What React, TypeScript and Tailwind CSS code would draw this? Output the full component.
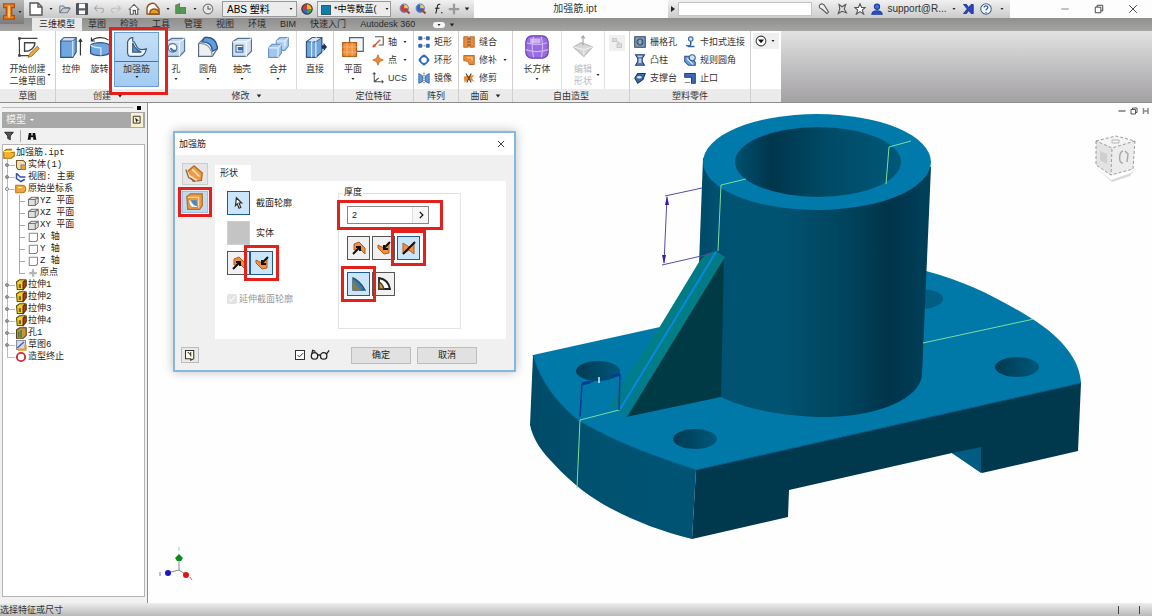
import { useState } from 'react'
import type { ReactNode } from 'react'
import clsx from 'clsx'

interface IconProps {
  className?: string
}

interface SvgProps extends IconProps {
  children: ReactNode
  box?: string
}

function Svg({ children, className = 'h-3 w-3', box = '0 0 16 16' }: SvgProps) {
  return (
    <svg viewBox={box} className={clsx('shrink-0', className)} fill="none" stroke="#555" strokeWidth="1.4" aria-hidden="true">
      {children}
    </svg>
  )
}

function Dot({ className = 'h-1 w-1' }: IconProps) {
  return (
    <Svg box="0 0 4 4" className={className}>
      <path d="M0.5 1h3L2 3z" fill="#222" stroke="none" />
    </Svg>
  )
}

/* ---------- large ribbon icons ---------- */

const big = 'h-6 w-6'

const SketchIcon = () => (
  <Svg box="0 0 28 28" className={big}>
    <path d="M4 4h21M4 4v20M4 24h12" stroke="#444" />
    <path d="M10 9h12c0 6-5 10-12 10z" stroke="#444" strokeWidth="1.6" />
    <path d="M2.500 2.500h3v3h-3zM2.500 22.500h3v3h-3z" fill="#444" stroke="none" />
    <path d="M25 13l-9 9-2 4 4-1 9-9z" fill="#efa93a" stroke="#9a6514" strokeWidth="1" />
  </Svg>
)

const ExtrudeIcon = () => (
  <Svg box="0 0 28 28" className={big}>
    <path d="M2 7l4-4h14v17l-4 6H2z" fill="#6fa8e0" stroke="#2f5582" />
    <path d="M2 7l4-4h14l-4 4z" fill="#cfe3f7" stroke="#2f5582" strokeWidth="1" />
    <path d="M16 7v18" stroke="#d8e9f8" />
    <path d="M25 24V5M23 8l2-3 2 3" stroke="#333" />
  </Svg>
)

const RevolveIcon = () => (
  <Svg box="0 0 28 28" className={big}>
    <path d="M3 12c4-4 18-4 22 0v9c-4 4-18 4-22 0z" fill="#6fa8e0" stroke="#2f5582" />
    <path d="M3 12c4 3 9 3 12 3v9" stroke="#d8e9f8" />
    <path d="M4 7c5-5 15-5 20-1M4 3v4h4" stroke="#333" />
  </Svg>
)

const RibIcon = () => (
  <Svg box="0 0 28 28" className={big}>
    <path d="M7 25c-3 0-4-2-4-5V8c1-3 3-5 6-5v4c4 1 3 7 7 9 3 2 6 1 9 0-1 5-3 9-8 9z" fill="#f5f9fd" stroke="#395b82" />
    <path d="M9 9v11h10c-5-2-8-5-10-11z" fill="#5b97cf" stroke="#395b82" />
  </Svg>
)

const HoleIcon = () => (
  <Svg box="0 0 28 28" className={big}>
    <path d="M3 8l6-4h15v15l-6 6H3z" fill="#c3d5e9" stroke="#54749a" />
    <path d="M3 8h15v17M18 8l6-4" stroke="#eef5fb" />
    <circle cx="10" cy="15" r="5" fill="#fff" stroke="#54749a" />
    <path d="M8 15a4 4 0 0 0 6 3" stroke="#3672b3" strokeWidth="2.500" />
  </Svg>
)

const FilletIcon = () => (
  <Svg box="0 0 28 28" className={big}>
    <path d="M3 10l7-7c9-1 14 4 15 13l-6 9H3z" fill="#eceff3" stroke="#5f6b7a" />
    <path d="M10 3c9-1 14 4 15 13l-6 3c0-8-5-11-12-11z" fill="#5d9ee0" stroke="#2f5582" />
    <path d="M3 10c9-1 15 4 16 15" stroke="#8a97a7" />
  </Svg>
)

const ShellIcon = () => (
  <Svg box="0 0 28 28" className={big}>
    <path d="M3 8l6-4h16v15l-6 6H3z" fill="#d3e1f0" stroke="#54749a" />
    <path d="M3 8h16v17M19 8l6-4" stroke="#f3f8fc" />
    <path d="M7 12h8v8H7z" fill="#fff" stroke="#54749a" />
    <path d="M9 14h6v4H9z" fill="#2f6cb0" stroke="none" />
  </Svg>
)

const CombineIcon = () => (
  <Svg box="0 0 28 28" className={big}>
    <path d="M12 7l4-4h10v10l-4 5H12z" fill="#b5d3f1" stroke="#6c97c8" />
    <path d="M3 15l4-4h11v10l-4 5H3z" fill="#a3c7ec" stroke="#6c97c8" />
    <path d="M3 15h11v11M14 15l4-4M22 7l4-4M12 7h10v6" stroke="#e3effa" />
  </Svg>
)

const DirectIcon = () => (
  <Svg box="0 0 28 28" className={big}>
    <path d="M4 8l7-5h11v17l-7 6H4z" fill="#6fa4dc" stroke="#2f5582" />
    <path d="M4 8l7-5h11l-7 5z" fill="#d5e6f6" stroke="#2f5582" strokeWidth="1" />
    <path d="M15 8v18M10 8v18M10 8l6-5" stroke="#dcebf8" />
    <path d="M22 12h2v-3l4 5-4 5v-3h-2z" fill="#1e3350" stroke="none" />
  </Svg>
)

const PlaneIcon = () => (
  <Svg box="0 0 28 28" className={big}>
    <path d="M10 3h16v16H10z" fill="#f3f5f7" stroke="#52657c" />
    <path d="M2 9h16v16H2z" fill="#f0923f" stroke="#b65d16" />
    <path d="M7 9v16M13 9v16M2 14h16M2 20h16" stroke="#f8b67a" strokeWidth="1" />
  </Svg>
)

const BoxIcon = () => (
  <Svg box="0 0 28 28" className={big}>
    <rect x="1" y="1" width="26" height="26" rx="7" fill="#9b6be0" stroke="#6b3db5" />
    <path d="M2 9c7 3 16 3 24 0M1 17c8 3 17 3 26 0M10 2c-2 8-2 16 0 24M19 2c2 8 2 16 0 24" stroke="#cdb3f5" />
    <path d="M6 4h12v6H6z" fill="#e2d3fb" stroke="none" opacity=".7" />
  </Svg>
)

const EditShapeIcon = () => (
  <Svg box="0 0 28 28" className={big}>
    <path d="M3 14l9-5 13 5-10 11z" fill="#d7d7d7" stroke="#bcbcbc" />
    <path d="M14 1v11M12 4l2-3 2 3" stroke="#aaa" />
    <path d="M3 14l12 3 10-3M15 17v7" stroke="#eee" />
  </Svg>
)

/* ---------- small ribbon icons ---------- */

const small = 'h-3 w-3'

const AxisIcon = () => (
  <Svg className={small}>
    <path d="M4 1h11v11H9" stroke="#555" />
    <path d="M1 15L11 5" stroke="#e0562a" strokeWidth="2" />
    <circle cx="3" cy="13" r="2" fill="#e0562a" stroke="none" />
  </Svg>
)
const PointIcon = () => (
  <Svg className={small}>
    <path d="M8 1l2 5 5 2-5 2-2 5-2-5-5-2 5-2z" fill="#ee8a34" stroke="#c0601a" strokeWidth="1" />
  </Svg>
)
const UcsIcon = () => (
  <Svg className={small}>
    <path d="M3 1v12h12M3 13l6-5M1 3l2-2 2 2M13 11l2 2-2 2" />
  </Svg>
)
const RectPatternIcon = () => (
  <Svg className={small}>
    <path d="M1 1h4v4H1zM11 1h4v4h-4zM1 11h4v4H1zM11 11h4v4h-4z" fill="#2f6cc0" stroke="#25578f" strokeWidth="1" />
    <path d="M6 3h4M6 13h4" strokeDasharray="1 1" />
  </Svg>
)
const CircPatternIcon = () => (
  <Svg className={small}>
    <circle cx="8" cy="8" r="5" stroke="#2f6cc0" strokeWidth="2.500" />
    <path d="M6 1h4v3H6zM6 12h4v3H6zM1 6h3v4H1zM12 6h3v4h-3z" fill="#2f6cc0" stroke="none" />
  </Svg>
)
const MirrorIcon = () => (
  <Svg className={small}>
    <path d="M8 1v14" strokeDasharray="2 1" />
    <path d="M1 2l5 3v8l-5 2zM15 2l-5 3v8l5 2z" fill="#5d97d8" stroke="#2b5f9e" strokeWidth="1" />
  </Svg>
)
const StitchIcon = () => (
  <Svg className={small}>
    <path d="M1 1h6v14H1zM9 1h6v14H9z" fill="#ee8a34" stroke="#a9500f" strokeWidth="1" />
    <path d="M6 4h4M6 8h4M6 12h4" stroke="#555" />
  </Svg>
)
const PatchIcon = () => (
  <Svg className={small}>
    <path d="M1 2h14v12H8c0-4-3-5-7-5z" fill="#ee8a34" stroke="#a9500f" strokeWidth="1" />
    <path d="M5 5h7v4" stroke="#fbd3ac" />
  </Svg>
)
const TrimIcon = () => (
  <Svg className={small}>
    <path d="M1 6l14-2-3 4 3 5-8-3-5 4z" fill="#ee8a34" stroke="none" />
    <path d="M4 2l7 12M11 2L5 14" stroke="#444" />
  </Svg>
)
const GrillIcon = () => (
  <Svg className={small}>
    <path d="M1 1h14v14H1z" fill="#7d9fc4" stroke="#2d4562" />
    <circle cx="8" cy="8" r="4" fill="#c6def5" stroke="#2d4562" />
    <path d="M6 4v8M8 4v8M10 4v8" strokeWidth="1" />
  </Svg>
)
const BossIcon = () => (
  <Svg className={small}>
    <path d="M2 1h12l-3 5v4l3 5H2l3-5V6z" fill="#557fc0" stroke="#29457a" />
    <path d="M5 3h6M7 6v6M9 6v6" stroke="#dde9f8" />
  </Svg>
)
const RestIcon = () => (
  <Svg className={small}>
    <path d="M5 2h10l-3 8-7 5-4-7z" fill="#2f70bd" stroke="#1c3a61" />
    <ellipse cx="7" cy="7" rx="4" ry="2.500" fill="#cde2f6" stroke="#1c3a61" strokeWidth="1" />
  </Svg>
)
const SnapIcon = () => (
  <Svg className={small}>
    <circle cx="9" cy="4" r="3" fill="#d4e5f7" stroke="#2f62a3" />
    <path d="M9 7v4c0 3-5 3-6 1M5 14h9" stroke="#2f62a3" strokeWidth="2" />
  </Svg>
)
const RuleFilletIcon = () => (
  <Svg className={small}>
    <path d="M1 3h6l8 8v4H6l-5-5z" fill="#6b9edb" stroke="#2b4f83" />
    <circle cx="11" cy="5" r="4" fill="#d4e5f7" stroke="#2f62a3" />
    <path d="M4 6l8 8" stroke="#fff" />
  </Svg>
)
const LipIcon = () => (
  <Svg className={small}>
    <path d="M1 2h14v13h-5V7H1z" fill="#3968bd" stroke="#213e79" />
    <path d="M1 14h7" stroke="#888" />
  </Svg>
)

/* ---------- dialog icons ---------- */

type WedgeKind = 'left' | 'right' | 'both'

function WedgeIcon({ kind }: { kind: WedgeKind }) {
  return (
    <Svg className="h-4 w-4">
      {kind === 'left' && (
        <>
          <path d="M3 4l5-2 6 6v6l-5-5-6 1z" fill="#ef9140" stroke="#b25c18" strokeWidth="1" />
          <path d="M2 14l7-7M5 7h4v4" stroke="#111" strokeWidth="2" />
        </>
      )}
      {kind === 'right' && (
        <>
          <path d="M2 5l6 3 5-5v10l-5 1-6-6z" fill="#ef9140" stroke="#b25c18" strokeWidth="1" />
          <path d="M14 2L8 8M8 5v4h4" stroke="#111" strokeWidth="2" />
        </>
      )}
      {kind === 'both' && (
        <>
          <path d="M2 3l6 4 5-4v11l-5-4-6 4z" fill="#ef9140" stroke="#b25c18" strokeWidth="1" />
          <path d="M14 2L2 14" stroke="#111" strokeWidth="2" />
        </>
      )}
    </Svg>
  )
}

function RibKindIcon({ flat }: { flat?: boolean }) {
  return (
    <Svg box="0 0 24 22" className="h-5 w-6">
      {flat ? (
        <>
          <path d="M3 5l4-3h13v13l-3 4H4z" fill="#ef9a3c" stroke="#a8733b" />
          <path d="M4 6h12v12" stroke="#fbd6a4" />
          <path d="M5 8c3 0 4 7 10 7v2H9c-3-1-4-5-4-9z" fill="#f5f3ee" stroke="#b98346" strokeWidth="1" />
          <path d="M8 9h6v6c-4 0-5-3-6-6z" fill="#3b8ad4" stroke="none" />
        </>
      ) : (
        <>
          <path d="M4 8l7-6 9 8-1 8-9 1z" fill="#f09a44" stroke="#b06922" />
          <path d="M2 6l4 7 8 5M9 6l8 8" stroke="#fbdcb5" strokeWidth="2" />
          <path d="M2 6l3 9 7 4" stroke="#7b6652" />
        </>
      )}
    </Svg>
  )
}

function ExtentIcon({ filled }: { filled?: boolean }) {
  return (
    <Svg className="h-4 w-4">
      {filled ? (
        <>
          <path d="M2 2c3 1 9 6 12 12H2z" fill="#2f7fb5" stroke="#33546b" />
          <path d="M2 3v11h9c-4-2-7-6-9-11z" fill="#8c7a3a" stroke="none" />
        </>
      ) : (
        <>
          <path d="M3 2c6 1 10 5 11 11H3z" fill="#fff" stroke="#222" strokeWidth="1.800" />
          <path d="M3 6c3 1 4 4 5 7H3z" fill="#d29a45" stroke="#4c4526" />
        </>
      )}
    </Svg>
  )
}

/* ---------- title bar ---------- */

function QuickBar() {
  return (
    <div className="flex h-full w-[474px] shrink-0 items-center bg-gradient-to-b from-[#f1f1f1] to-[#c9c9c9] pl-7">
      <div className="flex w-[194px] items-center justify-between pr-2">
        <button aria-label="新建"><Svg className="h-4 w-4"><path d="M2 2h8l4 4v8H2z" fill="#fff" /><path d="M10 2v4h4" /></Svg></button>
        <Dot />
        <button aria-label="打开"><Svg className="h-3 w-3"><path d="M1 4h5l2 2h5v2M1 4v9h10l4-6H5l-4 6" fill="#c3ccd4" stroke="#74808b" /></Svg></button>
        <button aria-label="保存"><Svg className="h-3 w-3"><path d="M1 1h14v14H1z" fill="#595f69" stroke="#333" /><path d="M4 1h8v6H4zM4 10h8v5H4z" fill="#fff" stroke="none" /></Svg></button>
        <button aria-label="撤消"><Svg className="h-3 w-3"><path d="M6 3L2 7l4 4M2 7h9c4 0 4 5 0 6" stroke="#a5a5a5" /></Svg></button>
        <button aria-label="重做"><Svg className="h-3 w-3"><path d="M10 3l4 4-4 4M14 7H5c-4 0-4 5 0 6" stroke="#bdbdbd" /></Svg></button>
        <button aria-label="主页"><Svg className="h-3 w-3"><path d="M1 9l7-7 7 7M3 8v7h4v-5h3v5h3V8" fill="#fff" /></Svg></button>
        <button aria-label="外观"><Svg className="h-4 w-4"><path d="M2 13V7c1-5 7-6 9-3l3 4v5z" fill="#fff" stroke="#8a5a20" /><path d="M5 13v-2c1-4 7-4 9 0v2z" fill="#ee9a2e" stroke="#8a5a20" /></Svg></button>
        <Dot />
        <button aria-label="更新"><Svg className="h-3 w-3"><path d="M1 3l5-2v13H1zM7 6h7v8H7z" fill="#4aa04a" stroke="#6c7c6c" /></Svg></button>
        <Dot />
        <button aria-label="选择"><Svg className="h-3 w-3"><circle cx="8" cy="8" r="6.500" fill="#e7e7e7" stroke="#777" /><path d="M8 4v4h4" /></Svg></button>
      </div>
      <div className="relative mr-1 w-[75px]">
        <select aria-label="材料" className="block h-4 w-full appearance-none border border-[#9a9a9a] bg-[#ececec] pl-1 text-[10px] leading-[13px]">
          <option>ABS 塑料</option>
        </select>
        <Dot className="pointer-events-none absolute top-1.5 right-1 h-1 w-1" />
      </div>
      <button aria-label="色轮">
        <Svg className="h-3 w-3">
          <g stroke="none">
            <path d="M8 8V1a7 7 0 0 1 7 7z" fill="#e8b928" />
            <path d="M8 8h7a7 7 0 0 1-7 7z" fill="#3da34c" />
            <path d="M8 8v7a7 7 0 0 1-7-7z" fill="#3b63c9" />
            <path d="M8 8H1a7 7 0 0 1 7-7z" fill="#d03c34" />
          </g>
          <circle cx="8" cy="8" r="7" stroke="#333" />
        </Svg>
      </button>
      <div className="relative mx-1 w-[74px]">
        <select aria-label="外观颜色" className="block h-4 w-full appearance-none border border-[#9a9a9a] bg-[#ececec] pl-4 text-[9px] leading-[13px]">
          <option>*中等数蓝(</option>
        </select>
        <span className="pointer-events-none absolute top-1 left-1 h-2.5 w-2.5 border border-[#33596b] bg-[#0b7fae]" />
        <Dot className="pointer-events-none absolute top-1.5 right-0.5 h-1 w-1" />
      </div>
      <div className="flex flex-1 items-center justify-between px-1">
        {['#d03c34', '#3b63c9'].map((color) => (
          <button key={color} aria-label="调整外观">
            <Svg className="h-3 w-3"><circle cx="7" cy="7" r="5.500" fill={color} stroke="#6a86b8" /><path d="M7 2a5 5 0 0 1 5 5H7z" fill="#f0d048" stroke="none" /><path d="M8 8l6 6" stroke="#b34040" strokeWidth="3" /></Svg>
          </button>
        ))}
        <button aria-label="参数"><Svg className="h-3 w-3"><path d="M11 2c-3-1-4 1-4 4L5 14M4 7h6M12 13h2" stroke="#222" /></Svg></button>
        <button aria-label="添加"><Svg className="h-3 w-3"><path d="M8 1v14M1 8h14" stroke="#999" strokeWidth="3" /></Svg></button>
        <Dot className="h-1.5 w-1.5" />
      </div>
    </div>
  )
}

function TitleBar() {
  return (
    <div className="flex h-[18px] items-center bg-[#fdfdfd]">
      <QuickBar />
      <div className="flex-1 pl-2 text-center text-[10px] leading-none text-[#333]">加强筋.ipt</div>
      <div className="flex h-full w-[342px] shrink-0 items-center bg-gradient-to-b from-[#f1f1f1] to-[#cbcbcb]">
        <Svg className="mx-0.5 h-1.5 w-1.5" box="0 0 6 6"><path d="M1 0l4 3-4 3z" fill="#222" stroke="none" /></Svg>
        <input aria-label="搜索帮助" className="h-3.5 w-[134px] border border-[#c4c4c4] bg-white text-[9px]" />
        <div className="flex flex-1 items-center justify-between px-1.5">
          <button aria-label="搜索"><Svg><path d="M2 3c2-3 6-2 7 1l5 8-2 2-7-6C2 7 1 5 2 3z" fill="#eee" /></Svg></button>
          <button aria-label="通讯中心"><Svg><path d="M4 2l4 3 5-3-2 6 3 5-6-2-5 3 2-6z" fill="#ddd" /></Svg></button>
          <button aria-label="收藏夹"><Svg><path d="M8 1l2 5h5l-4 3.500 2 5.500-5-3.500L3 15l2-5.500L1 6h5z" fill="#fff" /></Svg></button>
          <button className="flex items-center gap-1 text-[10px] leading-none text-[#333]">
            <Svg><circle cx="8" cy="5" r="3.500" fill="#3f6ee0" stroke="#1e3ea0" /><path d="M1 15c1-6 13-6 14 0z" fill="#2b50c8" stroke="#1e3ea0" /></Svg>
            support@R...
          </button>
          <Dot />
          <button aria-label="Exchange"><Svg><path d="M2 2l5 6-5 6h4l3-4 3 4h3V2h-3L9 6 6 2z" fill="#2c47c4" stroke="#16257a" strokeWidth="1" /></Svg></button>
          <button aria-label="帮助" className="flex items-center gap-2">
            <Svg><circle cx="8" cy="8" r="7" fill="#fff" stroke="#3f5d85" /><path d="M5.500 6c0-3 5-3 5 0 0 2-2.500 2-2.500 4M8 12v1.500" stroke="#2c5cc4" strokeWidth="1.800" /></Svg>
            <Dot />
          </button>
        </div>
      </div>
      <div className="flex w-[142px] shrink-0 items-center justify-end gap-6 pr-3.5">
        <button aria-label="最小化"><Svg className="h-2.5 w-2.5"><path d="M2 8h12" stroke="#777" /></Svg></button>
        <button aria-label="还原"><Svg className="h-2.5 w-2.5"><path d="M2 5h9v9H2zM5 5V2h9v9h-3" stroke="#333" /></Svg></button>
        <button aria-label="关闭"><Svg className="h-2.5 w-2.5"><path d="M2 2l12 12M14 2L2 14" stroke="#333" /></Svg></button>
      </div>
    </div>
  )
}

const menuTabs = ['草图', '检验', '工具', '管理', '视图', '环境', 'BIM', '快速入门', 'Autodesk 360']

function MenuTabs() {
  return (
    <nav className="flex h-[13px] items-center gap-3.5 bg-gradient-to-b from-[#8f8f8f] to-[#a5a5a3] pl-8 text-[9px] leading-[13px] text-[#2b2b2b]">
      <button className="-mr-2 h-full w-[50px] bg-[#e9e9e9]">三维模型</button>
      {menuTabs.map((tab) => (
        <button key={tab} className="h-full whitespace-nowrap">{tab}</button>
      ))}
      <button aria-label="最小化功能区" className="ml-1 flex items-center gap-1">
        <span className="flex h-1.5 w-3 items-center justify-center rounded-full bg-[#f4f4f4]">
          <Dot />
        </span>
        <Dot className="h-1.5 w-1.5" />
      </button>
    </nav>
  )
}

/* ---------- ribbon ---------- */

interface BigButtonProps {
  icon: ReactNode
  label: string
  second?: string
  drop?: boolean
  width?: string
  faded?: boolean
}

function BigButton({ icon, label, second, drop, width = 'w-9', faded }: BigButtonProps) {
  return (
    <button
      className={clsx(
        'relative flex h-full shrink-0 flex-col items-center overflow-hidden pt-1 text-[9px] leading-3 whitespace-nowrap',
        width,
        faded ? 'text-[#bbb]' : 'text-[#333]',
      )}
    >
      {icon}
      <span className="mt-1">{label}</span>
      {second && <span>{second}</span>}
      {drop && !second && <Dot className="mt-0.5 h-1 w-1" />}
      {drop && second && <Dot className="absolute right-1 bottom-3 h-1 w-1" />}
    </button>
  )
}

function SmallButton({ icon, label, drop }: { icon: ReactNode; label: string; drop?: boolean }) {
  return (
    <button className="flex h-[18px] items-center gap-1 text-[9px] leading-3 whitespace-nowrap text-[#333]">
      {icon}
      <span>{label}</span>
      {drop && <Dot className="ml-0.5 h-1 w-1" />}
    </button>
  )
}

interface GroupProps {
  caption: string
  width: string
  drop?: boolean
  noLine?: boolean
  children: ReactNode
}

function Group({ caption, width, drop, noLine, children }: GroupProps) {
  return (
    <section className={clsx('flex shrink-0 flex-col', width, !noLine && 'border-r border-[#cfcfcf]')}>
      <div className="flex h-[58px] items-stretch bg-white">{children}</div>
      <div className="flex h-[13px] items-center justify-center gap-1.5 bg-[#ebebeb] text-[9px] leading-3 text-[#333]">
        {caption}
        {drop && <Dot className="h-1.5 w-1.5" />}
      </div>
    </section>
  )
}

function Ribbon() {
  return (
    <div className="flex h-[72px] border-b border-[#8c8c8c] bg-gradient-to-b from-[#e2e2e2] to-[#a3a1a4]">
      <Group caption="草图" width="w-14">
        <BigButton icon={<SketchIcon />} label="开始创建" second="二维草图" drop width="w-[55px]" />
      </Group>
      <Group caption="创建" width="w-[104px]" drop noLine>
        <BigButton icon={<ExtrudeIcon />} label="拉伸" width="w-[30px]" />
        <BigButton icon={<RevolveIcon />} label="旋转" width="w-[27px]" />
        <div className="relative shrink-0 p-px">
          <button className="flex h-[55px] w-[45px] flex-col items-center border border-[#6d9fd6] bg-gradient-to-b from-[#c5def6] to-[#a3cbf2] pt-0.5 text-[9px] leading-3 text-[#333]">
            <RibIcon />
            <span className="mt-0.5 w-full border-t border-[#3d73b5] pt-px">加强筋</span>
            <Dot />
          </button>
          <span className="pointer-events-none absolute -top-1 -right-2 -bottom-1.5 -left-1 z-10 border-3 border-[#e3201b]" />
        </div>
      </Group>
      <Group caption="修改" width="w-[174px]" drop>
        <BigButton icon={<HoleIcon />} label="孔" drop width="w-8" />
        <BigButton icon={<FilletIcon />} label="圆角" drop width="w-8" />
        <BigButton icon={<ShellIcon />} label="抽壳" drop width="w-9" />
        <BigButton icon={<CombineIcon />} label="合并" drop width="w-9" />
        <div className="w-px bg-[#d9d9d9]" />
        <BigButton icon={<DirectIcon />} label="直接" width="w-9" />
      </Group>
      <Group caption="定位特征" width="w-20">
        <BigButton icon={<PlaneIcon />} label="平面" drop width="w-[38px]" />
        <div className="flex flex-col pt-0.5">
          <SmallButton icon={<AxisIcon />} label="轴" drop />
          <SmallButton icon={<PointIcon />} label="点" drop />
          <SmallButton icon={<UcsIcon />} label="UCS" />
        </div>
      </Group>
      <Group caption="阵列" width="w-[45px]">
        <div className="flex flex-col pt-0.5 pl-1">
          <SmallButton icon={<RectPatternIcon />} label="矩形" />
          <SmallButton icon={<CircPatternIcon />} label="环形" />
          <SmallButton icon={<MirrorIcon />} label="镜像" />
        </div>
      </Group>
      <Group caption="曲面" width="w-[54px]" drop>
        <div className="flex flex-col pt-0.5 pl-1">
          <SmallButton icon={<StitchIcon />} label="缝合" />
          <SmallButton icon={<PatchIcon />} label="修补" drop />
          <SmallButton icon={<TrimIcon />} label="修剪" />
        </div>
      </Group>
      <Group caption="自由造型" width="w-[117px]">
        <BigButton icon={<BoxIcon />} label="长方体" drop width="w-12" />
        <div className="w-px bg-[#e2e2e2]" />
        <BigButton icon={<EditShapeIcon />} label="编辑" second="形状" drop faded width="w-[42px]" />
        <div className="w-px bg-[#e2e2e2]" />
        <button aria-label="转换" className="m-1 flex h-4 w-4 items-center justify-center bg-[#f0f0f0]">
          <Svg><path d="M2 2h5v4H2zM8 9h6v5H8zM7 5l4 3" fill="#ddd" stroke="#c8c8c8" /></Svg>
        </button>
      </Group>
      <Group caption="塑料零件" width="w-[121px]">
        <div className="grid grid-cols-[50px_1fr] grid-rows-[18px_18px_18px] pt-0.5 pl-1">
          <SmallButton icon={<GrillIcon />} label="栅格孔" />
          <SmallButton icon={<SnapIcon />} label="卡扣式连接" />
          <SmallButton icon={<BossIcon />} label="凸柱" />
          <SmallButton icon={<RuleFilletIcon />} label="规则圆角" />
          <SmallButton icon={<RestIcon />} label="支撑台" />
          <SmallButton icon={<LipIcon />} label="止口" />
        </div>
      </Group>
      <Group caption="" width="w-[30px]" noLine>
        <button aria-label="更多" className="m-0.5 flex h-4 flex-1 items-center gap-1 bg-[#efefef] pl-0.5">
          <Svg><circle cx="8" cy="8" r="6.500" fill="#fff" stroke="#444" /><path d="M4 6h8l-4 5z" fill="#111" stroke="none" /></Svg>
          <Dot />
        </button>
      </Group>
    </div>
  )
}

/* ---------- model browser ---------- */

type NodeKind = 'part' | 'solid' | 'view' | 'folder' | 'plane' | 'axis' | 'point' | 'extrude' | 'hole' | 'sketch' | 'end'

function NodeIcon({ kind }: { kind: NodeKind }) {
  switch (kind) {
    case 'part':
      return <Svg><path d="M1 6l4-3h6v4h4v5l-4 3H1z" fill="#f5b62c" stroke="#a36c0b" /><path d="M1 6h10l4-3" stroke="#fff2c0" /></Svg>
    case 'solid':
      return <Svg><path d="M2 2h9l3 3v9H4l-2-3z" fill="#f7dfa0" stroke="#735c2c" /><path d="M8 8h6v6H8z" fill="#e9a13a" stroke="#6b83b8" /></Svg>
    case 'view':
      return <Svg><path d="M2 3l5 5h7M2 3v7l6 4 5-3" stroke="#3450b4" strokeWidth="2" /></Svg>
    case 'folder':
      return <Svg><path d="M1 3h8c7 0 7 10 0 10H1z" fill="#f0a63c" stroke="#b57618" /><path d="M4 6h5" stroke="#fff" /></Svg>
    case 'plane':
      return <Svg><path d="M2 6l4-3h9v7l-4 4H2zM2 6h9v8M11 6l4-3" fill="#e0e0e0" stroke="#777" /></Svg>
    case 'axis':
      return <Svg><path d="M3 3h11v9M3 3v11h9" stroke="#888" /><path d="M12 14l2-2" /></Svg>
    case 'point':
      return <Svg><path d="M8 3v10M3 8h10" stroke="#b5b5b5" strokeWidth="3" /></Svg>
    case 'extrude':
      return <Svg><path d="M2 4l4-3h8l-3 3v10H3z" fill="#f4cf28" stroke="#5d4c08" /><path d="M11 4l4-2v7l-4 5z" fill="#b23a22" stroke="#5d2a08" /><path d="M5 7h3v5H5z" fill="#7a6614" stroke="none" /></Svg>
    case 'hole':
      return <Svg><path d="M2 4l4-3h9v10l-4 4H2z" fill="#c6953a" stroke="#594012" /><path d="M5 6v7M8 4v10" stroke="#507a3d" strokeWidth="2" /></Svg>
    case 'sketch':
      return <Svg><path d="M2 2h12v12H2z" fill="#d5d9ea" stroke="#8c8ca3" /><path d="M3 12l9-8" stroke="#4763b5" strokeWidth="2" /><path d="M4 14h10V8" stroke="#e29833" strokeWidth="3" /></Svg>
    case 'end':
      return <Svg><circle cx="8" cy="8" r="5.500" stroke="#d02b35" strokeWidth="2.500" /></Svg>
  }
}

const treeNodes: { label: string; kind: NodeKind; level: number; leaf?: boolean }[] = [
  { label: '加强筋.ipt', kind: 'part', level: 0, leaf: true },
  { label: '实体(1)', kind: 'solid', level: 1 },
  { label: '视图: 主要', kind: 'view', level: 1 },
  { label: '原始坐标系', kind: 'folder', level: 1 },
  { label: 'YZ 平面', kind: 'plane', level: 2 },
  { label: 'XZ 平面', kind: 'plane', level: 2 },
  { label: 'XY 平面', kind: 'plane', level: 2 },
  { label: 'X 轴', kind: 'axis', level: 2 },
  { label: 'Y 轴', kind: 'axis', level: 2 },
  { label: 'Z 轴', kind: 'axis', level: 2 },
  { label: '原点', kind: 'point', level: 2 },
  { label: '拉伸1', kind: 'extrude', level: 1 },
  { label: '拉伸2', kind: 'extrude', level: 1 },
  { label: '拉伸3', kind: 'extrude', level: 1 },
  { label: '拉伸4', kind: 'extrude', level: 1 },
  { label: '孔1', kind: 'hole', level: 1 },
  { label: '草图6', kind: 'sketch', level: 1 },
  { label: '造型终止', kind: 'end', level: 1, leaf: true },
]

function Browser() {
  return (
    <aside className="flex w-[148px] shrink-0 flex-col border-r border-[#8f8f8f] bg-[#f1f1f1] px-0.5">
      <div className="flex h-[9px] items-center gap-1 pr-1">
        <div className="h-px flex-1 bg-[#bdbdbd]" />
        <span className="h-1 w-1 bg-black" />
      </div>
      <div className="flex h-4 items-center justify-between bg-[#a8a8a8] pr-0.5 pl-1 text-[10px] leading-none text-[#f2f2f2]">
        <span className="flex items-center gap-1">
          模型
          <Svg box="0 0 4 4" className="h-1 w-1"><path d="M0 1h4L2 3z" fill="#fff" stroke="none" /></Svg>
        </span>
        <button aria-label="帮助" className="flex h-3.5 w-3 items-center justify-center bg-[#f7f1cf]">
          <Svg className="h-2.5 w-2.5"><path d="M2 2h11v11H2z" stroke="#222" /><path d="M5 4l6 5H8l-1 4z" fill="#222" stroke="none" /></Svg>
        </button>
      </div>
      <div className="flex h-4 items-center gap-1.5 pl-0.5">
        <button aria-label="过滤器"><Svg className="h-2.5 w-2.5"><path d="M1 2h14l-5 6v6l-4-2V8z" fill="#555" stroke="#222" /></Svg></button>
        <span className="h-3 w-px bg-[#aaa]" />
        <button aria-label="查找"><Svg className="h-2.5 w-2.5"><path d="M1 14l2-11h4v4h2V3h4l2 11h-5v-4H6v4z" fill="#111" stroke="none" /></Svg></button>
      </div>
      <ul className="mb-1.5 flex-1 overflow-hidden border border-[#b5b5b5] bg-white pt-0.5 font-['Liberation_Mono','Noto_Sans_CJK_SC',monospace] text-[9px] leading-3 text-[#222]">
        {treeNodes.map((node, i) => (
          <li key={node.label} className="flex h-3 items-stretch whitespace-nowrap">
            {node.level > 0 && (
              <span className="relative w-3">
                <span className={clsx('absolute top-0 left-1 w-px bg-[#bbb]', i === treeNodes.length - 1 ? 'h-1.5' : 'h-full')} />
                {node.level === 1 && <span className="absolute top-1.5 left-1 h-px w-2 bg-[#bbb]" />}
                {node.level === 1 && !node.leaf && (
                  <span className={clsx('absolute top-1 left-0.5 h-1 w-1 rounded-full border border-[#888]', node.kind === 'folder' ? 'bg-white' : 'bg-[#999]')} />
                )}
              </span>
            )}
            {node.level === 2 && (
              <span className="relative w-3">
                <span className={clsx('absolute top-0 left-1 w-px bg-[#aaa]', node.kind === 'point' ? 'h-1.5' : 'h-full')} />
                <span className="absolute top-1.5 left-1 h-px w-1.5 bg-[#aaa]" />
              </span>
            )}
            <button className="flex items-center gap-px">
              <NodeIcon kind={node.kind} />
              <span>{node.label}</span>
            </button>
          </li>
        ))}
      </ul>
    </aside>
  )
}

/* ---------- rib dialog ---------- */

interface ToggleProps {
  label: string
  active?: boolean
  marked?: boolean
  disabled?: boolean
  children?: ReactNode
}

function Toggle({ label, active, marked, disabled, children }: ToggleProps) {
  return (
    <span className={clsx('relative shrink-0', marked && 'z-10')}>
      <button
        aria-label={label}
        aria-pressed={active}
        disabled={disabled}
        className={clsx(
          'flex h-6 w-[23px] items-center justify-center border',
          disabled && 'border-[#cfcfcf] bg-[#c4c4c4]',
          active && 'border-[#1d5a96] bg-[#cbe6fb]',
          !disabled && !active && 'border-[#555] bg-[#f1f1f1]',
        )}
      >
        {children}
      </button>
      {marked && <span className="pointer-events-none absolute -inset-1.5 border-3 border-[#e3201b]" />}
    </span>
  )
}

function RibDialog() {
  const [thickness, setThickness] = useState('2')
  const [preview, setPreview] = useState(true)

  return (
    <div
      role="dialog"
      aria-label="加强筋"
      className="absolute top-7 left-[25px] flex h-[241px] w-[343px] flex-col border-2 border-[#86b7dc] bg-[#f0f0f0] text-[9px] leading-3 text-[#222] shadow-[0_0_10px_rgba(0,0,0,0.25)]"
    >
      <div className="flex h-[22px] items-center justify-between bg-white pr-2 pl-1">
        <span>加强筋</span>
        <button aria-label="关闭"><Svg className="h-2.5 w-2.5"><path d="M3 3l10 10M13 3L3 13" stroke="#222" /></Svg></button>
      </div>
      <div className="flex flex-1 pr-2">
        <div className="flex w-10 shrink-0 flex-col items-center gap-1.5 pt-2">
          <button aria-label="垂直于草图平面" className="flex h-[22px] w-[26px] items-center justify-center border border-[#ccc] bg-[#e6e6e6]">
            <RibKindIcon />
          </button>
          <span className="relative">
            <button aria-label="平行于草图平面" aria-pressed="true" className="flex h-[22px] w-[26px] items-center justify-center border border-[#9cc1e2] bg-[#c3d9ee]">
              <RibKindIcon flat />
            </button>
            <span className="pointer-events-none absolute -inset-1 border-3 border-[#e3201b]" />
          </span>
        </div>
        <div className="flex flex-1 flex-col pt-2.5">
          <button role="tab" aria-selected="true" className="h-4 w-9 bg-white pr-2 text-center">形状</button>
          <div className="flex h-[158px] justify-between bg-white pr-[45px] pl-3">
            <div className="flex flex-col pt-2.5">
              <div className="flex items-center gap-1.5">
                <Toggle label="截面轮廓" active>
                  <Svg className="h-3.5 w-3.5"><path d="M5 2l6 6H8l2 5-2 1-2-5-2 2z" fill="#fff" stroke="#333" /></Svg>
                </Toggle>
                <span>截面轮廓</span>
              </div>
              <div className="mt-1.5 flex items-center gap-1.5">
                <Toggle label="实体" disabled />
                <span>实体</span>
              </div>
              <div className="mt-1.5 flex">
                <Toggle label="方向 1"><WedgeIcon kind="left" /></Toggle>
                <Toggle label="方向 2" active marked><WedgeIcon kind="right" /></Toggle>
              </div>
              <label className="mt-[18px] flex items-center gap-0.5 text-[#999]">
                <input type="checkbox" defaultChecked disabled className="h-2.5 w-2.5 opacity-60" />
                延伸截面轮廓
              </label>
            </div>
            <fieldset className="relative mt-3 mb-2.5 w-[123px] border border-[#e3e3e3] pt-3 pl-2">
              <legend className="absolute -top-2 left-1 bg-white px-px">厚度</legend>
              <div className="relative w-[82px]">
                <input
                  aria-label="厚度"
                  value={thickness}
                  onChange={(e) => setThickness(e.target.value)}
                  className="block h-[18px] w-full border border-[#888] bg-white px-1 text-[9px] leading-3"
                />
                <button aria-label="更多" className="absolute top-px right-px flex h-4 w-4 items-center justify-center border-l border-[#ddd] bg-[#f7f7f7]">
                  <Svg className="h-2.5 w-2.5"><path d="M6 3l5 5-5 5" stroke="#111" strokeWidth="2" /></Svg>
                </button>
                <span className="pointer-events-none absolute -top-1.5 -right-3.5 -bottom-1.5 -left-2.5 border-3 border-[#e3201b]" />
              </div>
              <div className="mt-3 flex gap-0.5">
                <Toggle label="一侧"><WedgeIcon kind="left" /></Toggle>
                <Toggle label="另一侧"><WedgeIcon kind="right" /></Toggle>
                <Toggle label="双侧" active marked><WedgeIcon kind="both" /></Toggle>
              </div>
              <div className="mt-3 flex gap-0.5">
                <Toggle label="到下一个" active marked><ExtentIcon filled /></Toggle>
                <Toggle label="有限的"><ExtentIcon /></Toggle>
              </div>
            </fieldset>
          </div>
        </div>
      </div>
      <div className="flex h-[30px] items-center pl-1.5">
        <button aria-label="帮助" className="flex h-4 w-[18px] items-center justify-center border border-[#bbb] bg-[#e9e9e9]">
          <Svg><path d="M2 2h11v11l-4 2v-2H2z" fill="#fffbe0" stroke="#333" /><path d="M5 4l4 4M9 4v6" stroke="#333" /></Svg>
        </button>
        <label className="relative ml-24 flex items-center gap-1">
          <input
            type="checkbox"
            aria-label="预览"
            checked={preview}
            onChange={(e) => setPreview(e.target.checked)}
            className="h-2.5 w-2.5 appearance-none border border-[#333] bg-white"
          />
          {preview && (
            <Svg className="pointer-events-none absolute left-0 h-2.5 w-2.5"><path d="M4 8l3 3 6-6" stroke="#333" strokeWidth="1.600" /></Svg>
          )}
          <Svg box="0 0 24 12" className="h-3 w-[22px]">
            <circle cx="6" cy="7" r="3.500" stroke="#222" />
            <circle cx="16" cy="7" r="3.500" stroke="#222" />
            <path d="M9.500 6h3M3 5l1-4 3 1M19 5l3-4" stroke="#222" />
          </Svg>
        </label>
        <div className="ml-auto flex gap-1.5 pr-[37px]">
          <button className="h-[17px] w-[60px] border border-[#bdbdbd] bg-[#e1e1e1]">确定</button>
          <button className="h-[17px] w-[60px] border border-[#bdbdbd] bg-[#e1e1e1]">取消</button>
        </div>
      </div>
    </div>
  )
}

/* ---------- graphics window ---------- */

function Model() {
  return (
    <svg viewBox="148 103 1004 500" className="h-full w-full" aria-label="零件模型" role="img">
      <defs>
        <linearGradient id="wall" x1="0" x2="1">
          <stop offset="0" stopColor="#004a67" />
          <stop offset=".1" stopColor="#005272" />
          <stop offset=".35" stopColor="#005371" />
          <stop offset=".65" stopColor="#00435c" />
          <stop offset=".82" stopColor="#00344a" />
          <stop offset="1" stopColor="#00405a" />
        </linearGradient>
        <linearGradient id="bore" x1="0" x2="1">
          <stop offset="0" stopColor="#00506f" />
          <stop offset=".22" stopColor="#00364c" />
          <stop offset=".55" stopColor="#004a66" />
          <stop offset="1" stopColor="#005878" />
        </linearGradient>
        <linearGradient id="rim" x1="0" x2="1">
          <stop offset="0" stopColor="#004a67" />
          <stop offset=".35" stopColor="#00516f" />
          <stop offset="1" stopColor="#005374" />
        </linearGradient>
        <linearGradient id="bolt" x1="0" x2="1">
          <stop offset="0" stopColor="#003a52" />
          <stop offset="1" stopColor="#00587a" />
        </linearGradient>
        <linearGradient id="ribTop" x1="0" y1="0" x2="0" y2="1">
          <stop offset="0" stopColor="#007a85" />
          <stop offset=".6" stopColor="#007f86" />
          <stop offset="1" stopColor="#007a92" />
        </linearGradient>
      </defs>
      {/* base plate */}
      <path d="M533 355L530 425C533 440 543 453 553 463C574 486 592 498 610 508C636 522 664 532 692 539L696 470L640 430Z" fill="url(#rim)" />
      <path d="M696 470L692 539L788 517L789 490L952 453L982 473L1078 451L1081 383L900 380Z" fill="#00384e" />
      <path d="M952 453L981 447L981 473Z" fill="#005c80" />
      <path d="M533 355L660 327L800 300L926 271C966 281 1004 301 1034 320C1062 338 1080 360 1081 383L696 470C656 457 615 442 579 421C559 405 540 382 533 355Z" fill="#0079a8" />
      <path d="M533 355C540 382 559 405 579 421C615 442 656 457 696 470L1081 383" fill="none" stroke="#005f87" />
      {/* bolt holes */}
      <ellipse cx="598" cy="371" rx="22" ry="10" fill="url(#bolt)" />
      <ellipse cx="695" cy="439" rx="22" ry="10" fill="url(#bolt)" />
      <ellipse cx="1017" cy="367" rx="22" ry="10" fill="url(#bolt)" />
      <ellipse cx="921" cy="299" rx="22" ry="10" fill="#005d83" />
      {/* cylinder */}
      <path d="M703 158L699 264L721 397C745 409 785 417 828 417C880 416 920 398 922 375L931 167Z" fill="url(#wall)" />
      <ellipse cx="817" cy="162" rx="114" ry="48" fill="#007aaa" />
      <ellipse cx="818" cy="162" rx="83" ry="35" fill="url(#bore)" />
      {/* rib */}
      <path d="M724 256L721 397L626 417Z" fill="#003a45" />
      <path d="M706 254L716 251L725 257L627 417L617 412L609 405L659 328L699 262Z" fill="url(#ribTop)" />
      <path d="M716 252L619 411" stroke="#0b86e4" strokeWidth="2" />
      {/* sketch edges */}
      <g fill="none" stroke="#7fdc9c" strokeWidth="1">
        <path d="M746 179L721 185L718 251" />
        <path d="M911 141L889 147L886 184" />
        <path d="M923 343L1034 319" />
        <path d="M619 410L580 420L577 488" />
      </g>
      {/* dimensions */}
      <g fill="none" stroke="#5a4aae" strokeWidth="1">
        <path d="M665 196L702 188M662 265L710 254M667 197L664 263" />
      </g>
      <path d="M667 196l2 9h-4zM664 264l-2-9h4z" fill="#3a1bb0" />
      <g fill="none" stroke="#003c91" strokeWidth="1.500">
        <path d="M582 384L580 417M620 374L619 410" />
        <path d="M582 384L590 382M620 374L611 377" strokeWidth="3" />
        <path d="M590 382L611 377" strokeDasharray="4 3" />
      </g>
      <path d="M599 377v6" stroke="#cfe9ff" strokeWidth="1.500" />
    </svg>
  )
}

function ViewCube() {
  return (
    <svg viewBox="0 0 50 54" className="absolute top-7 right-3 h-[54px] w-[50px]" fill="none" aria-hidden="true">
      <path d="M3 34l18 15 20-7 5-5-6 8-18 6z" fill="#d9d9d9" />
      <path d="M6 10l20-5 19 5-23 7z" fill="#f4f4f4" />
      <path d="M6 10l16 7-1 27L6 34z" fill="#e3e3e3" />
      <path d="M22 17l23-7-2 28-22 6z" fill="#ececec" />
      <g stroke="#9c9c9c" strokeDasharray="3 2">
        <path d="M6 10l20-5 19 5-23 7zM6 10v24l15 10 1-27M45 10l-2 28-22 6" />
      </g>
      <path d="M22 9h7v3h-7z" stroke="#b8b8b8" />
      <path d="M10 20l7 3v10l-7-4z" fill="#cfcfcf" />
      <path d="M33 20c-4 1-5 13 0 12M35 20l3 3-1 8" stroke="#a8a8a8" strokeWidth="1.500" />
    </svg>
  )
}

function Triad() {
  return (
    <svg viewBox="0 0 40 40" className="absolute bottom-5 left-2.5 h-10 w-10" fill="none" aria-hidden="true">
      <path d="M21 27V14M21 27l-12 3M21 27l6 4" stroke="#888" />
      <path d="M21 11l4 4-2 3h-4l-2-3z" fill="#0e8a1c" />
      <circle cx="10" cy="30" r="3" fill="#1717c4" />
      <circle cx="28" cy="32" r="3" fill="#e0140f" />
      <path d="M21 4v4" stroke="#7be89a" />
      <path d="M2 29v4" stroke="#7777dd" />
      <path d="M32 34l2 3" stroke="#ee6680" />
    </svg>
  )
}

function GraphicsWindow() {
  return (
    <main className="relative flex-1 overflow-hidden bg-[#fefefe]">
      <Model />
      <div className="absolute top-1 right-0.5 flex gap-1">
        <button aria-label="最小化窗口"><Svg className="h-2 w-2"><path d="M1 8h14" stroke="#777" strokeWidth="3" /></Svg></button>
        <button aria-label="还原窗口"><Svg className="h-2 w-2"><path d="M2 5h9v9H2zM5 5V2h9v9h-3" strokeWidth="2" /></Svg></button>
        <button aria-label="关闭窗口"><Svg className="h-2 w-2"><path d="M3 2v12M12 2v12M3 8h10" stroke="#888" strokeWidth="3" /></Svg></button>
      </div>
      <ViewCube />
      <Triad />
      <RibDialog />
    </main>
  )
}

export default function App() {
  return (
    <div className="flex h-screen flex-col overflow-hidden bg-[#fefefe] font-['Liberation_Sans','Noto_Sans_CJK_SC',sans-serif]">
      <header className="relative shrink-0">
        <TitleBar />
        <MenuTabs />
        <button aria-label="应用程序菜单" className="absolute top-0 left-0 flex h-6 w-6 items-center bg-gradient-to-b from-[#b9b9b9] to-[#7b7b7b]">
          <Svg box="0 0 20 22" className="h-5 w-[18px]">
            <path d="M4 2h12v4h-3v9h3v4H4v-4h3V6H4z" fill="#f08119" stroke="#b54c08" />
            <path d="M10 4v13" stroke="#ffd08a" strokeWidth="2" />
          </Svg>
          <Dot />
        </button>
        <Ribbon />
      </header>
      <div className="flex min-h-0 flex-1">
        <Browser />
        <GraphicsWindow />
      </div>
      <footer className="flex h-[13px] shrink-0 items-center justify-between bg-gradient-to-b from-[#ededed] to-[#b9b9b9] pr-3 text-[9px] leading-3 text-[#333]">
        <span>选择特征或尺寸</span>
        <span className="flex gap-5">
          <span className="h-2 w-px bg-[#444]" />
          <span className="h-2 w-px bg-[#444]" />
        </span>
      </footer>
    </div>
  )
}
